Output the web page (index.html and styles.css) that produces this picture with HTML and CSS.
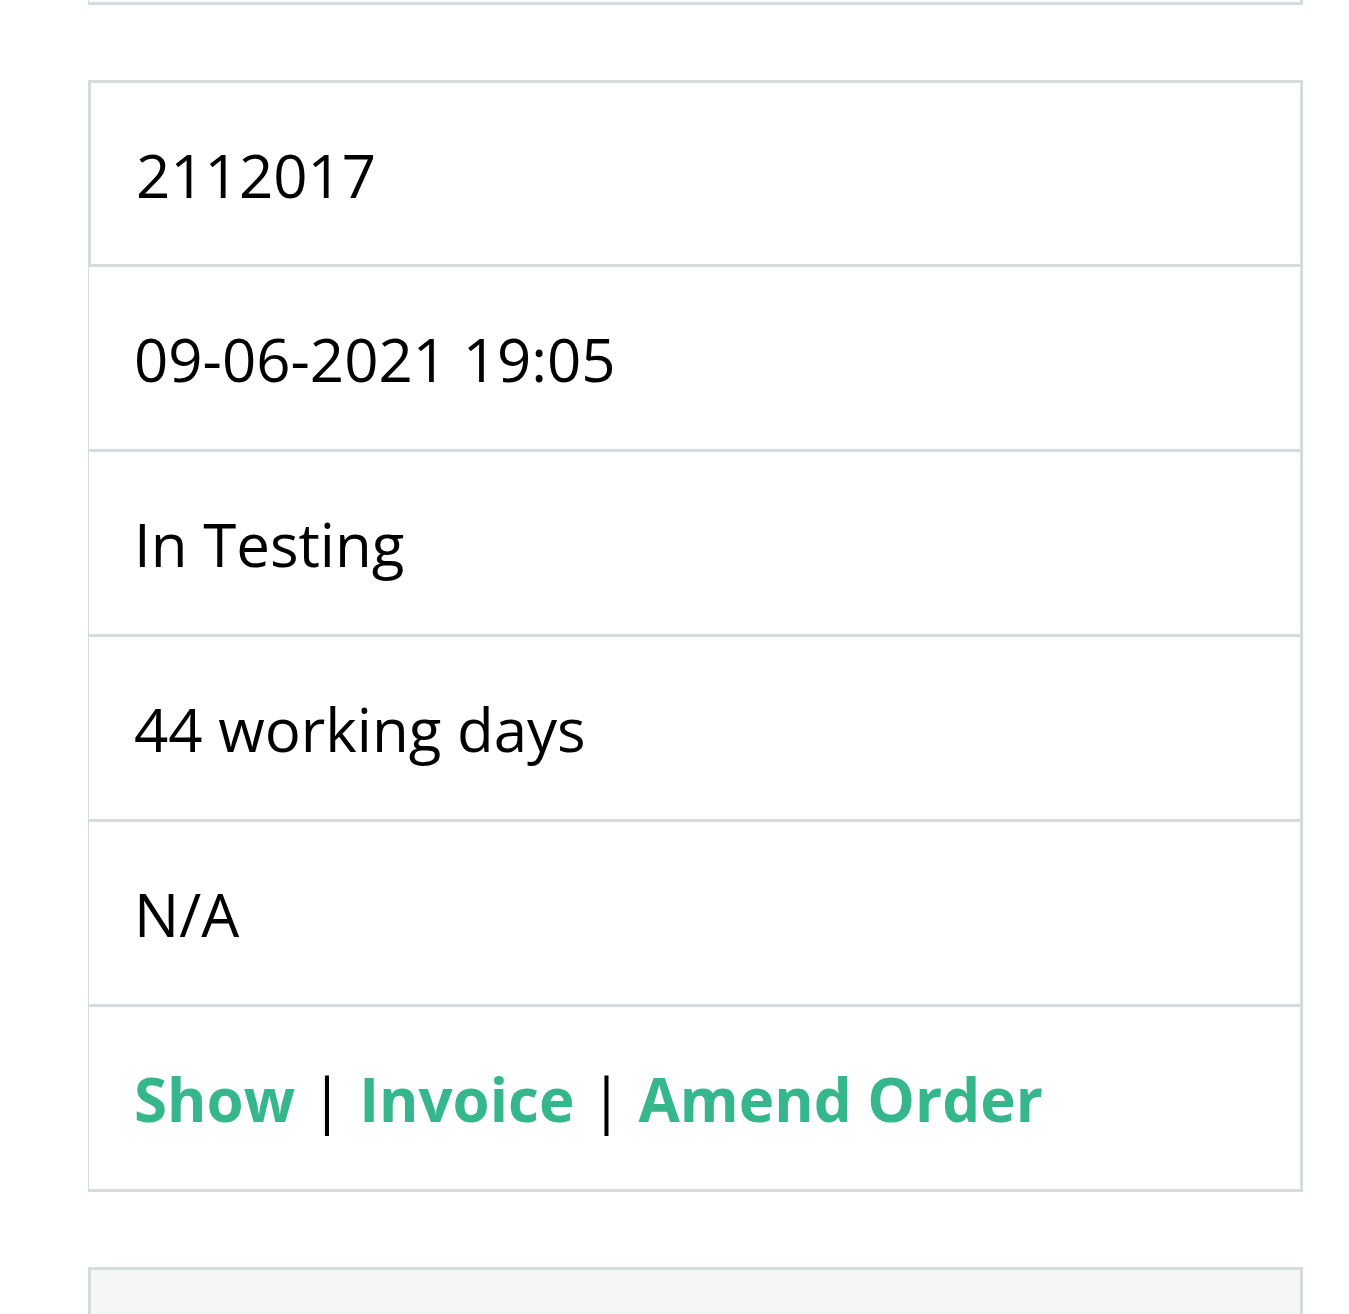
FILE: index.html
```html
<!DOCTYPE html>
<html>
<head>
<meta charset="utf-8">
<link rel="stylesheet" href="styles.css">
</head>
<body>
<div class="page">
  <div class="card card-prev"></div>
  <div class="card">
    <div class="row row-first">2112017</div>
    <div class="row">09-06-2021 19:05</div>
    <div class="row">In Testing</div>
    <div class="row">44 working days</div>
    <div class="row">N/A</div>
    <div class="row row-last"><a class="link" href="#">Show</a> | <a class="link" href="#">Invoice</a> | <a class="link" href="#">Amend Order</a></div>
  </div>
  <div class="card card-next"></div>
</div>
</body>
</html>
```
FILE: styles.css
```css
html, body {
  margin: 0;
  padding: 0;
  background: #ffffff;
}
.page {
  padding-left: 88px;
  width: 1215px;
  display: flex;
  flex-direction: column;
  gap: 75px;
  font-family: "Open Sans", "DejaVu Sans", sans-serif;
  color: #000;
}
.card {
  border: 3px solid #d6dcdd;
  border-left-width: 1px;
  background: #fff;
}
.card-prev {
  border-top: none;
  height: 2px;
}
.card-next {
  border-left-width: 3px;
  background: #f5f7f7;
  height: 60px;
  border-bottom: none;
}
.row {
  height: 185px;
  box-sizing: border-box;
  padding: 47px 42px 45px 45px;
  font-size: 60px;
  line-height: 90px;
  border-bottom: 3px solid #d6dcdd;
  white-space: nowrap;
}
.row-first {
  height: 184px;
  border-left: 2px solid #d6dcdd;
  padding-left: 45px;
}
.row-last {
  height: 182px;
  border-bottom: none;
}
.link {
  color: #36b68b;
  font-weight: 700;
  text-decoration: none;
}
```
